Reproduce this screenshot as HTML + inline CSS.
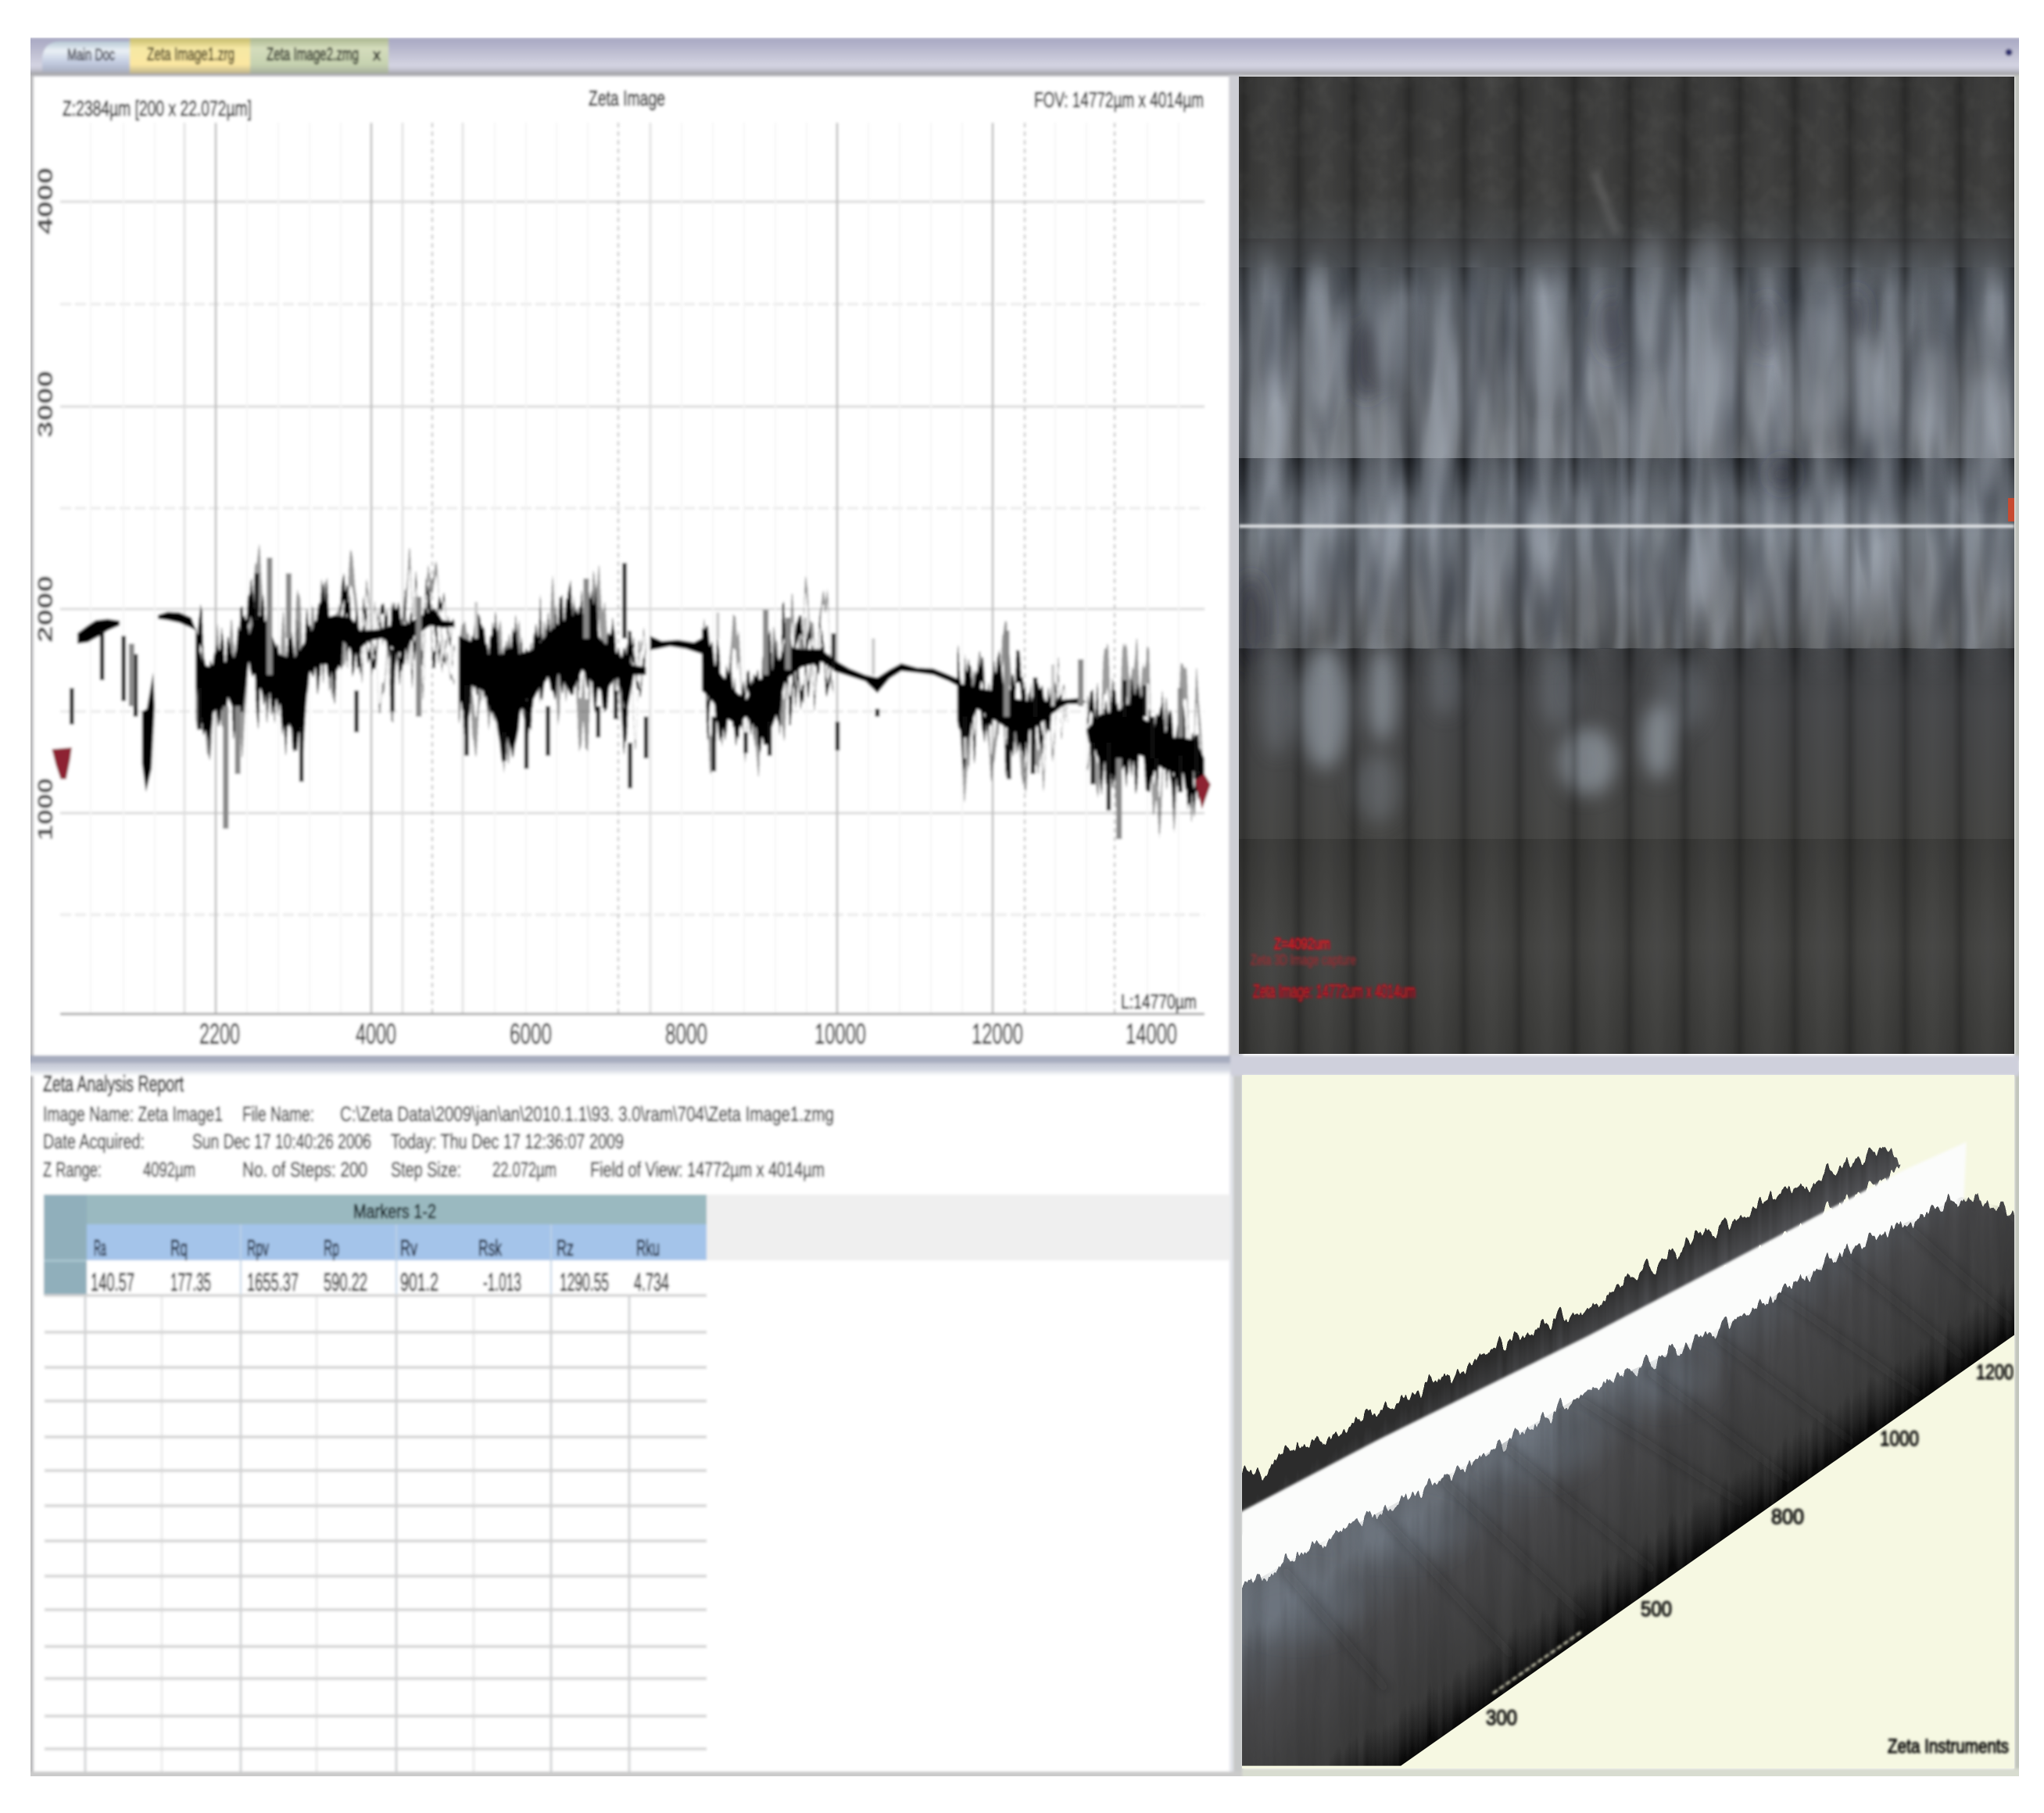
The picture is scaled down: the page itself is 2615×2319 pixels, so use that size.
<!DOCTYPE html>
<html><head><meta charset="utf-8"><title>Zeta Image</title>
<style>
html,body{margin:0;padding:0;background:#fff}
svg{display:block;position:absolute;left:0;top:0}
text{font-family:"Liberation Sans",sans-serif;white-space:pre}
</style></head><body>
<svg width="2615" height="2319" viewBox="0 0 2615 2319" xmlns="http://www.w3.org/2000/svg">
<defs>
<clipPath id="win"><rect x="39" y="48" width="2544" height="2224"/></clipPath>
<clipPath id="imgc"><rect x="1585" y="98" width="992" height="1250"/></clipPath>
<clipPath id="img3"><rect x="1589" y="1375" width="988" height="887"/></clipPath>
<clipPath id="bodyclip"><polygon transform="translate(1560,1370) scale(.673,.6053)" points="20,700 1530,0 1530,543 345,1468 20,1468"/></clipPath>
<clipPath id="bodyexact"><polygon transform="translate(1560,1370) scale(.673,.6053)" points="40,1096 180,1004 300,934 500,814 600,744 720,664 880,584 1000,514 1200,374 1410,266 1480,285 1510,320 1510,558 345,1468 40,1468"/></clipPath>
<filter id="b" filterUnits="userSpaceOnUse" x="0" y="0" width="2615" height="2319"><feGaussianBlur stdDeviation="1.5"/></filter>
<filter id="b9" filterUnits="userSpaceOnUse" x="1500" y="50" width="1115" height="1350"><feGaussianBlur stdDeviation="12"/></filter>
<filter id="b4" filterUnits="userSpaceOnUse" x="1500" y="50" width="1115" height="1350"><feGaussianBlur stdDeviation="5"/></filter>
<filter id="b14" filterUnits="userSpaceOnUse" x="1500" y="1300" width="1115" height="1000"><feGaussianBlur stdDeviation="14"/></filter>
<filter id="b6" filterUnits="userSpaceOnUse" x="1500" y="1300" width="1115" height="1000"><feGaussianBlur stdDeviation="6"/></filter>
<filter id="jag" filterUnits="userSpaceOnUse" x="60" y="600" width="1520" height="600" color-interpolation-filters="sRGB">
<feTurbulence type="fractalNoise" baseFrequency="0.11 0.0006" numOctaves="2" seed="3"/>
<feColorMatrix values="1.8 0 0 0 -.4  0 0 0 0 .5  0 0 0 0 0  0 0 0 0 1" result="m1"/>
<feDisplacementMap in="SourceGraphic" in2="m1" scale="85" xChannelSelector="G" yChannelSelector="R" result="d1"/>
<feTurbulence type="fractalNoise" baseFrequency="0.15 0.0006" numOctaves="2" seed="14"/>
<feColorMatrix values="1.8 0 0 0 -.4  0 0 0 0 .5  0 0 0 0 0  0 0 0 0 1" result="m2"/>
<feDisplacementMap in="SourceGraphic" in2="m2" scale="125" xChannelSelector="G" yChannelSelector="R" result="d2"/>
<feTurbulence type="fractalNoise" baseFrequency="0.09 0.0006" numOctaves="2" seed="27"/>
<feColorMatrix values="2 0 0 0 -.5  0 0 0 0 .5  0 0 0 0 0  0 0 0 0 1" result="m3"/>
<feDisplacementMap in="SourceGraphic" in2="m3" scale="190" xChannelSelector="G" yChannelSelector="R"/>
<feComponentTransfer result="d3"><feFuncA type="linear" slope=".4"/></feComponentTransfer>
<feMerge><feMergeNode in="d3"/><feMergeNode in="SourceGraphic"/><feMergeNode in="d1"/><feMergeNode in="d2"/></feMerge>
</filter>
<filter id="jag3" filterUnits="userSpaceOnUse" x="1500" y="1300" width="1115" height="1020" color-interpolation-filters="sRGB">
<feTurbulence type="fractalNoise" baseFrequency="0.09 0.0006" numOctaves="3" seed="8"/>
<feColorMatrix values="1.8 0 0 0 -.4  0 0 0 0 .5  0 0 0 0 0  0 0 0 0 1" result="m"/>
<feDisplacementMap in="SourceGraphic" in2="m" scale="26" xChannelSelector="G" yChannelSelector="R"/>
</filter>
<filter id="streak" filterUnits="userSpaceOnUse" x="1589" y="1375" width="988" height="887" color-interpolation-filters="sRGB">
<feTurbulence type="fractalNoise" baseFrequency="0.05 0.003" numOctaves="3" seed="21"/>
<feColorMatrix values="0 0 0 0 0  0 0 0 0 0  0 0 0 0 0  1.6 0 0 0 -.62"/>
</filter>
<filter id="mot" filterUnits="userSpaceOnUse" x="1585" y="310" width="992" height="520" color-interpolation-filters="sRGB">
<feTurbulence type="fractalNoise" baseFrequency=".028 .005" numOctaves="2" seed="5"/>
<feColorMatrix values="0 0 0 0 .78  0 0 0 0 .82  0 0 0 0 .88  1 0 0 0 -.36"/>
</filter>
<filter id="mot2" filterUnits="userSpaceOnUse" x="1585" y="342" width="992" height="488" color-interpolation-filters="sRGB">
<feTurbulence type="fractalNoise" baseFrequency=".03 .006" numOctaves="2" seed="12"/>
<feColorMatrix values="0 0 0 0 .12  0 0 0 0 .14  0 0 0 0 .18  1 0 0 0 -.42"/>
</filter>
<filter id="mot3" filterUnits="userSpaceOnUse" x="1585" y="98" width="992" height="210" color-interpolation-filters="sRGB">
<feTurbulence type="fractalNoise" baseFrequency=".04 .035" numOctaves="3" seed="31"/>
<feColorMatrix values="0 0 0 0 .75  0 0 0 0 .75  0 0 0 0 .72  1 0 0 0 -.42"/>
</filter>
<linearGradient id="bar" x1="0" y1="0" x2="0" y2="1"><stop offset="0" stop-color="#a6a6c2"/><stop offset=".35" stop-color="#bcbcd0"/><stop offset=".72" stop-color="#d4d4e2"/><stop offset=".84" stop-color="#c0c0cc"/><stop offset=".93" stop-color="#a2a2a6"/><stop offset="1" stop-color="#c8c8ce"/></linearGradient>
<linearGradient id="t1" x1="0" y1="0" x2="0" y2="1"><stop offset="0" stop-color="#b6c8d4"/><stop offset=".3" stop-color="#eaf0f6"/><stop offset=".7" stop-color="#c2cbe0"/><stop offset="1" stop-color="#a8aec0"/></linearGradient>
<linearGradient id="t2" x1="0" y1="0" x2="0" y2="1"><stop offset="0" stop-color="#c2b868"/><stop offset=".3" stop-color="#f6e8a4"/><stop offset=".75" stop-color="#fbe7a2"/><stop offset="1" stop-color="#bdb38a"/></linearGradient>
<linearGradient id="t3" x1="0" y1="0" x2="0" y2="1"><stop offset="0" stop-color="#a8b48c"/><stop offset=".3" stop-color="#d4dcbc"/><stop offset=".75" stop-color="#c6d2b0"/><stop offset="1" stop-color="#a6ae9c"/></linearGradient>
<linearGradient id="split" x1="0" y1="0" x2="0" y2="1"><stop offset="0" stop-color="#a5abbd"/><stop offset=".32" stop-color="#a8aec0"/><stop offset=".42" stop-color="#c6cad6"/><stop offset=".7" stop-color="#d4d8e2"/><stop offset="1" stop-color="#ffffff"/></linearGradient>
<linearGradient id="g0" x1="0" y1="0" x2="0" y2="1"><stop offset="0" stop-color="#383837"/><stop offset=".62" stop-color="#3b3b3a"/><stop offset=".8" stop-color="#424445"/><stop offset="1" stop-color="#4d5258"/></linearGradient>
<linearGradient id="g1" x1="0" y1="0" x2="0" y2="1"><stop offset="0" stop-color="#4f555c"/><stop offset=".5" stop-color="#656a71"/><stop offset="1" stop-color="#777c82"/></linearGradient>
<linearGradient id="g2" x1="0" y1="0" x2="0" y2="1"><stop offset="0" stop-color="#3f444b"/><stop offset=".16" stop-color="#5a6068"/><stop offset=".4" stop-color="#757c84"/><stop offset=".7" stop-color="#6b6f75"/><stop offset="1" stop-color="#585a5b"/></linearGradient>
<linearGradient id="g3" x1="0" y1="0" x2="0" y2="1"><stop offset="0" stop-color="#3e4043"/><stop offset=".3" stop-color="#454648"/><stop offset="1" stop-color="#434341"/></linearGradient>
<linearGradient id="g4" x1="0" y1="0" x2="0" y2="1"><stop offset="0" stop-color="#383836"/><stop offset=".5" stop-color="#434341"/><stop offset="1" stop-color="#3a3a38"/></linearGradient>
<linearGradient id="colg" x1="0" y1="0" x2="1" y2="0"><stop offset="0" stop-color="#000" stop-opacity=".24"/><stop offset=".14" stop-color="#000" stop-opacity=".04"/><stop offset=".5" stop-color="#fff" stop-opacity=".03"/><stop offset=".86" stop-color="#000" stop-opacity=".04"/><stop offset="1" stop-color="#000" stop-opacity=".24"/></linearGradient>
<pattern id="cols" patternUnits="userSpaceOnUse" x="1591" y="0" width="70.5" height="20"><rect width="70.5" height="20" fill="url(#colg)"/></pattern>
<linearGradient id="fd" x1="0" y1="0" x2="0" y2="1"><stop offset="0" stop-color="#fff"/><stop offset="1" stop-color="#000"/></linearGradient>
<linearGradient id="fadeTop" x1="0" y1="0" x2="0" y2="1"><stop offset="0" stop-color="#3f4042" stop-opacity="1"/><stop offset=".35" stop-color="#44474a" stop-opacity=".75"/><stop offset="1" stop-color="#4d5258" stop-opacity="0"/></linearGradient>
<mask id="mk1" maskUnits="userSpaceOnUse" x="1585" y="342" width="992" height="50"><rect x="1585" y="342" width="992" height="50" fill="url(#fd)"/></mask>
<mask id="mk2" maskUnits="userSpaceOnUse" x="1585" y="586" width="992" height="55"><rect x="1585" y="586" width="992" height="55" fill="url(#fd)"/></mask>
<mask id="mk3" maskUnits="userSpaceOnUse" x="1585" y="829" width="992" height="50"><rect x="1585" y="829" width="992" height="50" fill="url(#fd)"/></mask>
<linearGradient id="body3" gradientUnits="userSpaceOnUse" x1="700" y1="680" x2="946" y2="996"><stop offset="0" stop-color="#676d75"/><stop offset=".12" stop-color="#565a60"/><stop offset=".35" stop-color="#48484a"/><stop offset=".78" stop-color="#3c3c3c"/><stop offset=".9" stop-color="#252525"/><stop offset="1" stop-color="#0a0a0a"/></linearGradient>
<linearGradient id="ridge" gradientUnits="userSpaceOnUse" x1="600" y1="550" x2="660" y2="640"><stop offset="0" stop-color="#2c2c2c"/><stop offset="1" stop-color="#55565a"/></linearGradient>
</defs>
<rect width="2615" height="2319" fill="#fff"/>
<g clip-path="url(#win)"><g filter="url(#b)">
<rect x="30" y="40" width="2560" height="2240" fill="#fff"/>
<!-- tab bar -->
<rect x="30" y="48" width="2560" height="50" fill="url(#bar)"/>
<path d="M54 92V74Q56 54 76 53H166V92Z" fill="url(#t1)"/>
<rect x="166" y="48" width="154" height="46" fill="url(#t2)"/>
<rect x="320" y="48" width="177" height="46" fill="url(#t3)"/>
<text x="86" y="77" font-size="21" fill="#223" stroke="#223" stroke-width=".7" textLength="61" lengthAdjust="spacingAndGlyphs">Main Doc</text>
<text x="188" y="77" font-size="23" fill="#3a3000" stroke="#3a3000" stroke-width=".8" textLength="112" lengthAdjust="spacingAndGlyphs">Zeta Image1.zrg</text>
<text x="341" y="77" font-size="23" fill="#101808" stroke="#101808" stroke-width=".9" textLength="118" lengthAdjust="spacingAndGlyphs">Zeta Image2.zmg</text>
<text x="477" y="77" font-size="20" fill="#111" stroke="#111" stroke-width=".9">x</text>
<circle cx="2570" cy="67" r="4.5" fill="#2f2f70"/>
<!-- panels / splitters -->
<rect x="1572" y="96" width="18" height="1260" fill="#cdced4"/>
<rect x="1578" y="1370" width="12" height="900" fill="#c6c8c8"/>
<rect x="1573" y="1370" width="5" height="900" fill="#e2e4ea"/>
<rect x="2577" y="96" width="12" height="1260" fill="#c0c2bc"/>
<rect x="2577" y="1370" width="12" height="910" fill="#c2c6bc"/>
<rect x="30" y="97" width="13" height="2180" fill="#bcbcbe"/>
<rect x="30" y="1350" width="1544" height="26" fill="url(#split)"/>
<rect x="1574" y="1350" width="1010" height="26" fill="#cfd0dc"/>
<rect x="1589" y="2262" width="996" height="14" fill="#d8dcd0"/>
<rect x="30" y="2266" width="1559" height="14" fill="#cacaca"/>
<!-- chart grid -->
<g fill="none">
<path d="M77 389H1541M77 650H1541M77 910H1541M77 1170H1541" stroke="#e8e8e8" stroke-width="3" stroke-dasharray="14 5"/>
<path d="M77 258H1541M77 520H1541M77 779H1541M77 1040H1541" stroke="#d8d8d8" stroke-width="3"/>
<path d="M276 157V1297M475 157V1297M1071 157V1297M1270 157V1297" stroke="#bcbcbc" stroke-width="2.6"/>
<path d="M236 157V1297M515 157V1297M592 157V1297M832 157V1297" stroke="#dcdcdc" stroke-width="2.4"/>
<path d="M553 157V1297M791 157V1297M1311 157V1297M1426 157V1297" stroke="#c8c8c8" stroke-width="2.4" stroke-dasharray="6 5"/>
<path d="M116 157V1297M158 157V1297M198 157V1297M316 157V1297M356 157V1297M396 157V1297M436 157V1297M633 157V1297M673 157V1297M712 157V1297M752 157V1297M872 157V1297M912 157V1297M952 157V1297M992 157V1297M1032 157V1297M1111 157V1297M1151 157V1297M1191 157V1297M1231 157V1297M1350 157V1297M1390 157V1297M1468 157V1297M1508 157V1297" stroke="#f4f4f4" stroke-width="2"/>
<path d="M77 1297H1541" stroke="#a4a4a4" stroke-width="3"/>
</g>
<!-- profile -->
<g filter="url(#jag)"><g transform="translate(0,650) scale(1.0204,.3333)" fill="#050505">
<polygon points="245,480 255,600 265,610 275,580 290,600 305,560 318,430 322,400 335,440 350,560 368,580 385,500 398,430 420,410 440,420 452,470 475,465 490,450 510,445 530,410 545,385 555,430 570,435 570,455 555,460 540,450 520,490 505,560 495,545 480,500 462,510 445,560 430,510 412,600 395,600 385,640 378,860 368,860 358,800 350,690 335,700 325,680 312,590 305,780 295,790 285,720 272,770 262,800 250,700 245,690"/>
<polygon points="575,490 590,510 610,560 640,560 650,560 670,540 690,470 705,430 720,440 740,450 755,510 775,560 790,600 810,610 810,640 795,640 785,800 775,640 760,700 745,680 730,620 716,720 700,620 685,640 668,740 655,730 640,880 628,880 620,800 605,700 590,680 575,680"/>
<polygon points="880,560 895,600 915,680 935,740 950,660 968,640 985,530 1005,540 1030,540 1045,580 1045,620 1030,590 1005,610 985,660 975,780 968,840 950,850 935,800 925,835 908,800 890,730 880,700"/>
<polygon points="1200,670 1225,690 1245,700 1270,730 1290,740 1310,740 1330,742 1340,750 1330,765 1315,800 1295,850 1270,860 1250,820 1225,770 1210,890 1200,800"/>
<polygon points="1362,850 1380,790 1400,780 1415,750 1430,800 1445,830 1460,880 1480,880 1500,890 1510,960 1510,1010 1495,1010 1475,1020 1458,1000 1440,960 1420,940 1400,950 1385,970 1365,900"/>
</g></g>
<g transform="translate(0,650) scale(1.0204,.3333)" fill="#050505">
<polygon points="97,480 110,450 120,430 135,425 150,432 150,450 135,470 125,490 110,515 97,520"/>
<polygon points="178,780 184,770 192,630 194,760 190,1000 183,1090 178,980"/>
<polygon points="198,410 210,398 225,400 240,420 246,470 240,460 225,440 210,430 198,425"/>
<polygon points="815,490 830,510 850,505 870,515 885,490 890,540 880,560 860,540 840,530 825,540 815,545"/>
<polygon points="1045,580 1065,615 1085,640 1100,650 1115,620 1130,595 1150,612 1170,615 1190,640 1205,660 1205,690 1190,665 1170,640 1150,632 1130,625 1115,655 1100,710 1085,665 1065,645 1045,625"/>
<polygon points="1330,735 1355,728 1362,745 1350,752 1330,752"/>
<path fill="none" stroke="#111" stroke-width="5.5" d="M90 690V830M128 470V660M155 490V740M170 560V800M250 690V850M322 250V430M378 840V1050M447 700V860M492 540V780M585 680V950M632 860V970M660 780V1000M687 760V950M750 760V880M772 700V810M783 210V500M790 900V1075M810 800V960M895 800V1010M935 860V940M965 820V950M1050 820V930M1045 480V600M1100 770V800M1210 800V900M1265 850V1040M1295 840V1020M1298 650V800M1390 900V1160M1410 660V800M1435 680V800M1450 960V1010M1480 950V1090M1370 900V1060M1500 870V1040M1445 800V960"/>
<path fill="none" stroke="#888" stroke-width="7" d="M283 760V1230M298 760V1020M338 190V640M362 250V500M525 340V800M735 270V500M960 390V640M988 420V620M1262 470V800M1355 580V760M1403 960V1270M1480 690V880M165 520V760"/>
<path fill="none" stroke="#c8c8c8" stroke-width="4" d="M597 360V500M1095 500V640M900 400V500M1010 420V500M1210 880V960M520 340V420M1320 600V760"/>
<polygon points="65,925 90,918 88,965 83,1040 76,1040 70,985" fill="#8d2230"/>
<polygon points="1498,1045 1510,1020 1518,1060 1507,1155" fill="#8d2230"/>
</g>
<!-- chart text -->
<g fill="#000" stroke="#000" stroke-width=".9">
<text x="80" y="148" font-size="28" textLength="242" lengthAdjust="spacingAndGlyphs">Z:2384µm [200 x 22.072µm]</text>
<text x="753" y="135" font-size="28" textLength="98" lengthAdjust="spacingAndGlyphs">Zeta Image</text>
<text x="1323" y="137" font-size="28" textLength="217" lengthAdjust="spacingAndGlyphs">FOV: 14772µm x 4014µm</text>
<text x="1434" y="1290" font-size="26" textLength="97" lengthAdjust="spacingAndGlyphs">L:14770µm</text>
</g>
<g fill="#222" stroke="#222" stroke-width=".7">
<text x="255" y="1335" font-size="37" textLength="52" lengthAdjust="spacingAndGlyphs">2200</text>
<text x="455" y="1335" font-size="37" textLength="52" lengthAdjust="spacingAndGlyphs">4000</text>
<text x="652" y="1335" font-size="37" textLength="54" lengthAdjust="spacingAndGlyphs">6000</text>
<text x="851" y="1335" font-size="37" textLength="54" lengthAdjust="spacingAndGlyphs">8000</text>
<text x="1042" y="1335" font-size="37" textLength="66" lengthAdjust="spacingAndGlyphs">10000</text>
<text x="1243" y="1335" font-size="37" textLength="66" lengthAdjust="spacingAndGlyphs">12000</text>
<text x="1440" y="1335" font-size="37" textLength="66" lengthAdjust="spacingAndGlyphs">14000</text>
</g>
<g fill="#444" font-weight="700" font-size="27">
<text transform="translate(67,300) rotate(-90)" textLength="86" lengthAdjust="spacingAndGlyphs">4000</text>
<text transform="translate(67,560) rotate(-90)" textLength="86" lengthAdjust="spacingAndGlyphs">3000</text>
<text transform="translate(67,822) rotate(-90)" textLength="86" lengthAdjust="spacingAndGlyphs">2000</text>
<text transform="translate(67,1075) rotate(-90)" textLength="80" lengthAdjust="spacingAndGlyphs">1000</text>
</g>
<!-- report -->
<g fill="#111" stroke="#111" stroke-width=".6" font-size="27">
<text x="55" y="1396" font-size="29" stroke-width="1" fill="#000" stroke="#000" textLength="180" lengthAdjust="spacingAndGlyphs">Zeta Analysis Report</text>
<text x="55" y="1434" textLength="230" lengthAdjust="spacingAndGlyphs">Image Name: Zeta Image1</text>
<text x="310" y="1434" textLength="92" lengthAdjust="spacingAndGlyphs">File Name:</text>
<text x="435" y="1434" textLength="632" lengthAdjust="spacingAndGlyphs">C:\Zeta Data\2009\jan\an\2010.1.1\93. 3.0\ram\704\Zeta Image1.zmg</text>
<text x="55" y="1469" textLength="130" lengthAdjust="spacingAndGlyphs">Date Acquired:</text>
<text x="246" y="1469" textLength="229" lengthAdjust="spacingAndGlyphs">Sun Dec 17 10:40:26 2006</text>
<text x="500" y="1469" textLength="298" lengthAdjust="spacingAndGlyphs">Today: Thu Dec 17 12:36:07 2009</text>
<text x="55" y="1505" textLength="75" lengthAdjust="spacingAndGlyphs">Z Range:</text>
<text x="183" y="1505" textLength="67" lengthAdjust="spacingAndGlyphs">4092µm</text>
<text x="310" y="1505" textLength="160" lengthAdjust="spacingAndGlyphs">No. of Steps: 200</text>
<text x="500" y="1505" textLength="90" lengthAdjust="spacingAndGlyphs">Step Size:</text>
<text x="630" y="1505" textLength="82" lengthAdjust="spacingAndGlyphs">22.072µm</text>
<text x="755" y="1505" textLength="300" lengthAdjust="spacingAndGlyphs">Field of View: 14772µm x 4014µm</text>
</g>
<!-- table -->
<rect x="904" y="1528" width="670" height="84" fill="#efefef"/>
<rect x="56" y="1528" width="848" height="38" fill="#9ab9c0"/>
<rect x="111" y="1566" width="793" height="48" fill="#a4c4ea"/>
<rect x="111" y="1612" width="793" height="45" fill="#fff"/>
<rect x="56" y="1528" width="55" height="129" fill="#90afbb"/>
<rect x="56" y="1611" width="55" height="3" fill="#a9c4cf"/>
<path d="M308 1566V1657M507 1566V1657M705 1566V1657" stroke="#bcd0e4" stroke-width="2"/>
<g fill="none">
<path d="M207 1657V2266M405 1657V2266M606 1657V2266" stroke="#e8e8e8" stroke-width="2.5"/>
<path d="M109 1657V2266M308 1657V2266M507 1657V2266M705 1657V2266M805 1657V2266" stroke="#c8cacc" stroke-width="2.5"/>
<path d="M57 1657H904M57 1704H904M57 1749H904M57 1792H904M57 1838H904M57 1881H904M57 1926H904M57 1971H904M57 2016H904M57 2059H904M57 2106H904M57 2147H904M57 2195H904M57 2237H904" stroke="#d2d2d2" stroke-width="3.5"/>
</g>
<text x="452" y="1558" font-size="25" fill="#04141a" stroke="#04141a" stroke-width=".9" textLength="106" lengthAdjust="spacingAndGlyphs">Markers 1-2</text>
<g fill="#08142c" stroke="#08142c" stroke-width=".9" font-size="29">
<text x="120" y="1606" textLength="16" lengthAdjust="spacingAndGlyphs">Ra</text>
<text x="218" y="1606" textLength="22" lengthAdjust="spacingAndGlyphs">Rq</text>
<text x="316" y="1606" textLength="28" lengthAdjust="spacingAndGlyphs">Rpv</text>
<text x="414" y="1606" textLength="20" lengthAdjust="spacingAndGlyphs">Rp</text>
<text x="512" y="1606" textLength="22" lengthAdjust="spacingAndGlyphs">Rv</text>
<text x="612" y="1606" textLength="30" lengthAdjust="spacingAndGlyphs">Rsk</text>
<text x="712" y="1606" textLength="22" lengthAdjust="spacingAndGlyphs">Rz</text>
<text x="814" y="1606" textLength="30" lengthAdjust="spacingAndGlyphs">Rku</text>
</g>
<g fill="#000" stroke="#000" stroke-width=".9" font-size="32">
<text x="116" y="1651" textLength="56" lengthAdjust="spacingAndGlyphs">140.57</text>
<text x="218" y="1651" textLength="52" lengthAdjust="spacingAndGlyphs">177.35</text>
<text x="316" y="1651" textLength="66" lengthAdjust="spacingAndGlyphs">1655.37</text>
<text x="414" y="1651" textLength="56" lengthAdjust="spacingAndGlyphs">590.22</text>
<text x="512" y="1651" textLength="49" lengthAdjust="spacingAndGlyphs">901.2</text>
<text x="618" y="1651" textLength="49" lengthAdjust="spacingAndGlyphs">-1.013</text>
<text x="716" y="1651" textLength="63" lengthAdjust="spacingAndGlyphs">1290.55</text>
<text x="811" y="1651" textLength="45" lengthAdjust="spacingAndGlyphs">4.734</text>
</g>
</g>
<!-- top-right stitched image -->
<g clip-path="url(#imgc)">
<rect x="1585" y="98" width="992" height="245" fill="url(#g0)"/>
<rect x="1585" y="342" width="992" height="245" fill="url(#g1)"/>
<rect x="1585" y="586" width="992" height="244" fill="url(#g2)"/>
<rect x="1585" y="829" width="992" height="245" fill="url(#g3)"/>
<rect x="1585" y="1073" width="992" height="276" fill="url(#g4)"/>
<rect x="1585" y="98" width="992" height="210" filter="url(#mot3)" opacity=".15"/>
<rect x="1585" y="310" width="992" height="520" filter="url(#mot)"/>
<rect x="1585" y="342" width="992" height="488" filter="url(#mot2)"/>
<rect x="1585" y="305" width="992" height="75" fill="url(#fadeTop)"/>
<g filter="url(#b9)">
<g transform="translate(1560,60) scale(.673,.854)">
<g fill="#a3adb8" opacity=".36">
<ellipse cx="185" cy="440" rx="30" ry="110"/>
<ellipse cx="330" cy="430" rx="24" ry="70"/>
<ellipse cx="930" cy="440" rx="50" ry="160"/>
<ellipse cx="820" cy="370" rx="30" ry="90"/>
<ellipse cx="1450" cy="580" rx="45" ry="90"/>
<ellipse cx="910" cy="790" rx="30" ry="50"/>
<ellipse cx="620" cy="440" rx="40" ry="90"/>
<ellipse cx="1140" cy="480" rx="50" ry="100"/>
<ellipse cx="1240" cy="520" rx="45" ry="70"/>
<ellipse cx="1350" cy="520" rx="35" ry="70"/>
</g>
<g fill="#a3adb8" opacity=".6">
<ellipse cx="200" cy="990" rx="48" ry="90"/>
<ellipse cx="310" cy="970" rx="28" ry="70"/>
<ellipse cx="700" cy="1070" rx="55" ry="50"/>
<ellipse cx="835" cy="1040" rx="32" ry="55"/>
</g>
<g fill="#8f98a2" opacity=".3">
<ellipse cx="430" cy="950" rx="30" ry="50"/>
<ellipse cx="650" cy="960" rx="40" ry="60"/>
<ellipse cx="110" cy="980" rx="30" ry="80"/>
<ellipse cx="300" cy="1110" rx="45" ry="50"/>
<ellipse cx="880" cy="970" rx="45" ry="55"/>
</g>
<g fill="#2e3238" opacity=".55">
<ellipse cx="745" cy="420" rx="26" ry="50"/>
<ellipse cx="1070" cy="640" rx="24" ry="24"/>
<ellipse cx="1040" cy="420" rx="20" ry="50"/>
<ellipse cx="1210" cy="400" rx="20" ry="40"/>
<ellipse cx="280" cy="470" rx="30" ry="60"/>
<ellipse cx="60" cy="860" rx="30" ry="70"/>
</g>
</g>
</g>
<rect x="1585" y="98" width="992" height="1250" fill="url(#cols)"/>
<g mask="url(#mk1)"><rect x="1585" y="342" width="992" height="50" fill="url(#cols)"/></g>
<g mask="url(#mk2)"><rect x="1585" y="586" width="992" height="55" fill="url(#cols)"/><rect x="1585" y="586" width="992" height="55" fill="url(#cols)"/></g>
<g mask="url(#mk3)"><rect x="1585" y="829" width="992" height="50" fill="url(#cols)"/></g>
<g filter="url(#b4)">
<path d="M2040 220L2068 300" stroke="#777" stroke-width="4"/>
</g>
<rect x="1585" y="671" width="992" height="4" fill="#e6e8ea" filter="url(#b)"/>
<rect x="2569" y="637" width="9" height="30" fill="#c84a30"/>
<g filter="url(#b)" fill="#e0101e" stroke="#e0101e" stroke-width=".9">
<text x="1630" y="1214" font-size="20" textLength="72" lengthAdjust="spacingAndGlyphs">Z=4092um</text>
<text x="1600" y="1234" font-size="18" fill="#9a2a30" stroke="#9a2a30" stroke-width=".4" textLength="135" lengthAdjust="spacingAndGlyphs">Zeta 3D Image capture</text>
<text x="1603" y="1276" font-size="24" fill="#c8101e" stroke="#c8101e" textLength="208" lengthAdjust="spacingAndGlyphs">Zeta Image: 14772um x 4014um</text>
</g>
</g>
<!-- 3D panel -->
<g clip-path="url(#img3)">
<rect x="1589" y="1375" width="988" height="887" fill="#f6f8e2"/>
<g filter="url(#jag3)"><g transform="translate(1560,1370) scale(.673,.6053)">
<polygon fill="url(#ridge)" points="40,845 85,850 105,815 120,805 165,790 215,770 240,765 265,735 305,715 350,695 385,670 400,655 450,640 490,610 515,590 540,570 570,565 640,520 690,510 725,490 745,465 800,425 870,385 890,360 930,340 1000,305 1045,265 1120,240 1190,195 1270,155 1295,205 1000,400 700,600 400,780 40,980"/>
</g></g>
<g filter="url(#b)"><g transform="translate(1560,1370) scale(.673,.6053)">
<polygon fill="#fbfcfb" points="40,932 300,780 700,560 1000,385 1300,210 1420,150 1415,280 1200,400 1000,540 880,610 720,690 600,770 500,840 300,960 180,1030 40,1122"/>
</g></g>
<g clip-path="url(#bodyclip)"><g filter="url(#jag3)"><g transform="translate(1560,1370) scale(.673,.6053)">
<polygon fill="url(#body3)" points="20,1104 180,1004 300,934 500,814 600,744 720,664 880,584 1000,514 1200,374 1410,266 1480,285 1530,320 1530,700 500,1650 20,1650"/>
</g></g></g>
<g clip-path="url(#bodyexact)">
<g filter="url(#b14)"><g transform="translate(1560,1370) scale(.673,.6053)">
<g fill="#7a8794" opacity=".28"><ellipse cx="150" cy="1130" rx="120" ry="70"/><ellipse cx="600" cy="800" rx="110" ry="60"/><ellipse cx="350" cy="980" rx="110" ry="50"/><ellipse cx="850" cy="660" rx="90" ry="50"/></g>
</g></g>
<g filter="url(#b6)"><g transform="translate(1560,1370) scale(.673,.6053)" fill="none" stroke="#1a1a1c" stroke-width="16" opacity=".22">
<path d="M120 1050L320 1310M300 930L560 1240M420 860L700 1160M540 790L830 1060M680 690L1000 920M810 630L1090 870M940 560L1210 790M1060 470L1340 690M1180 390L1420 610M1300 320L1510 530"/>
</g></g>
<rect x="1589" y="1375" width="988" height="887" filter="url(#streak)" opacity=".15"/>
</g>
<g filter="url(#b)">
<path d="M1910 2166L2025 2086" stroke="#c9c8b0" stroke-width="3" stroke-dasharray="7 3"/>
<g fill="#000" stroke="#000" stroke-width="1" font-size="27">
<text x="1901" y="2206" textLength="40" lengthAdjust="spacingAndGlyphs">300</text>
<text x="2099" y="2067" textLength="40" lengthAdjust="spacingAndGlyphs">500</text>
<text x="2266" y="1949" textLength="42" lengthAdjust="spacingAndGlyphs">800</text>
<text x="2405" y="1849" textLength="50" lengthAdjust="spacingAndGlyphs">1000</text>
<text x="2528" y="1764" textLength="48" lengthAdjust="spacingAndGlyphs">1200</text>
<text x="2415" y="2242" font-size="25" textLength="155" lengthAdjust="spacingAndGlyphs">Zeta Instruments</text>
</g>
</g>
</g>
</g>
</svg>
</body></html>
